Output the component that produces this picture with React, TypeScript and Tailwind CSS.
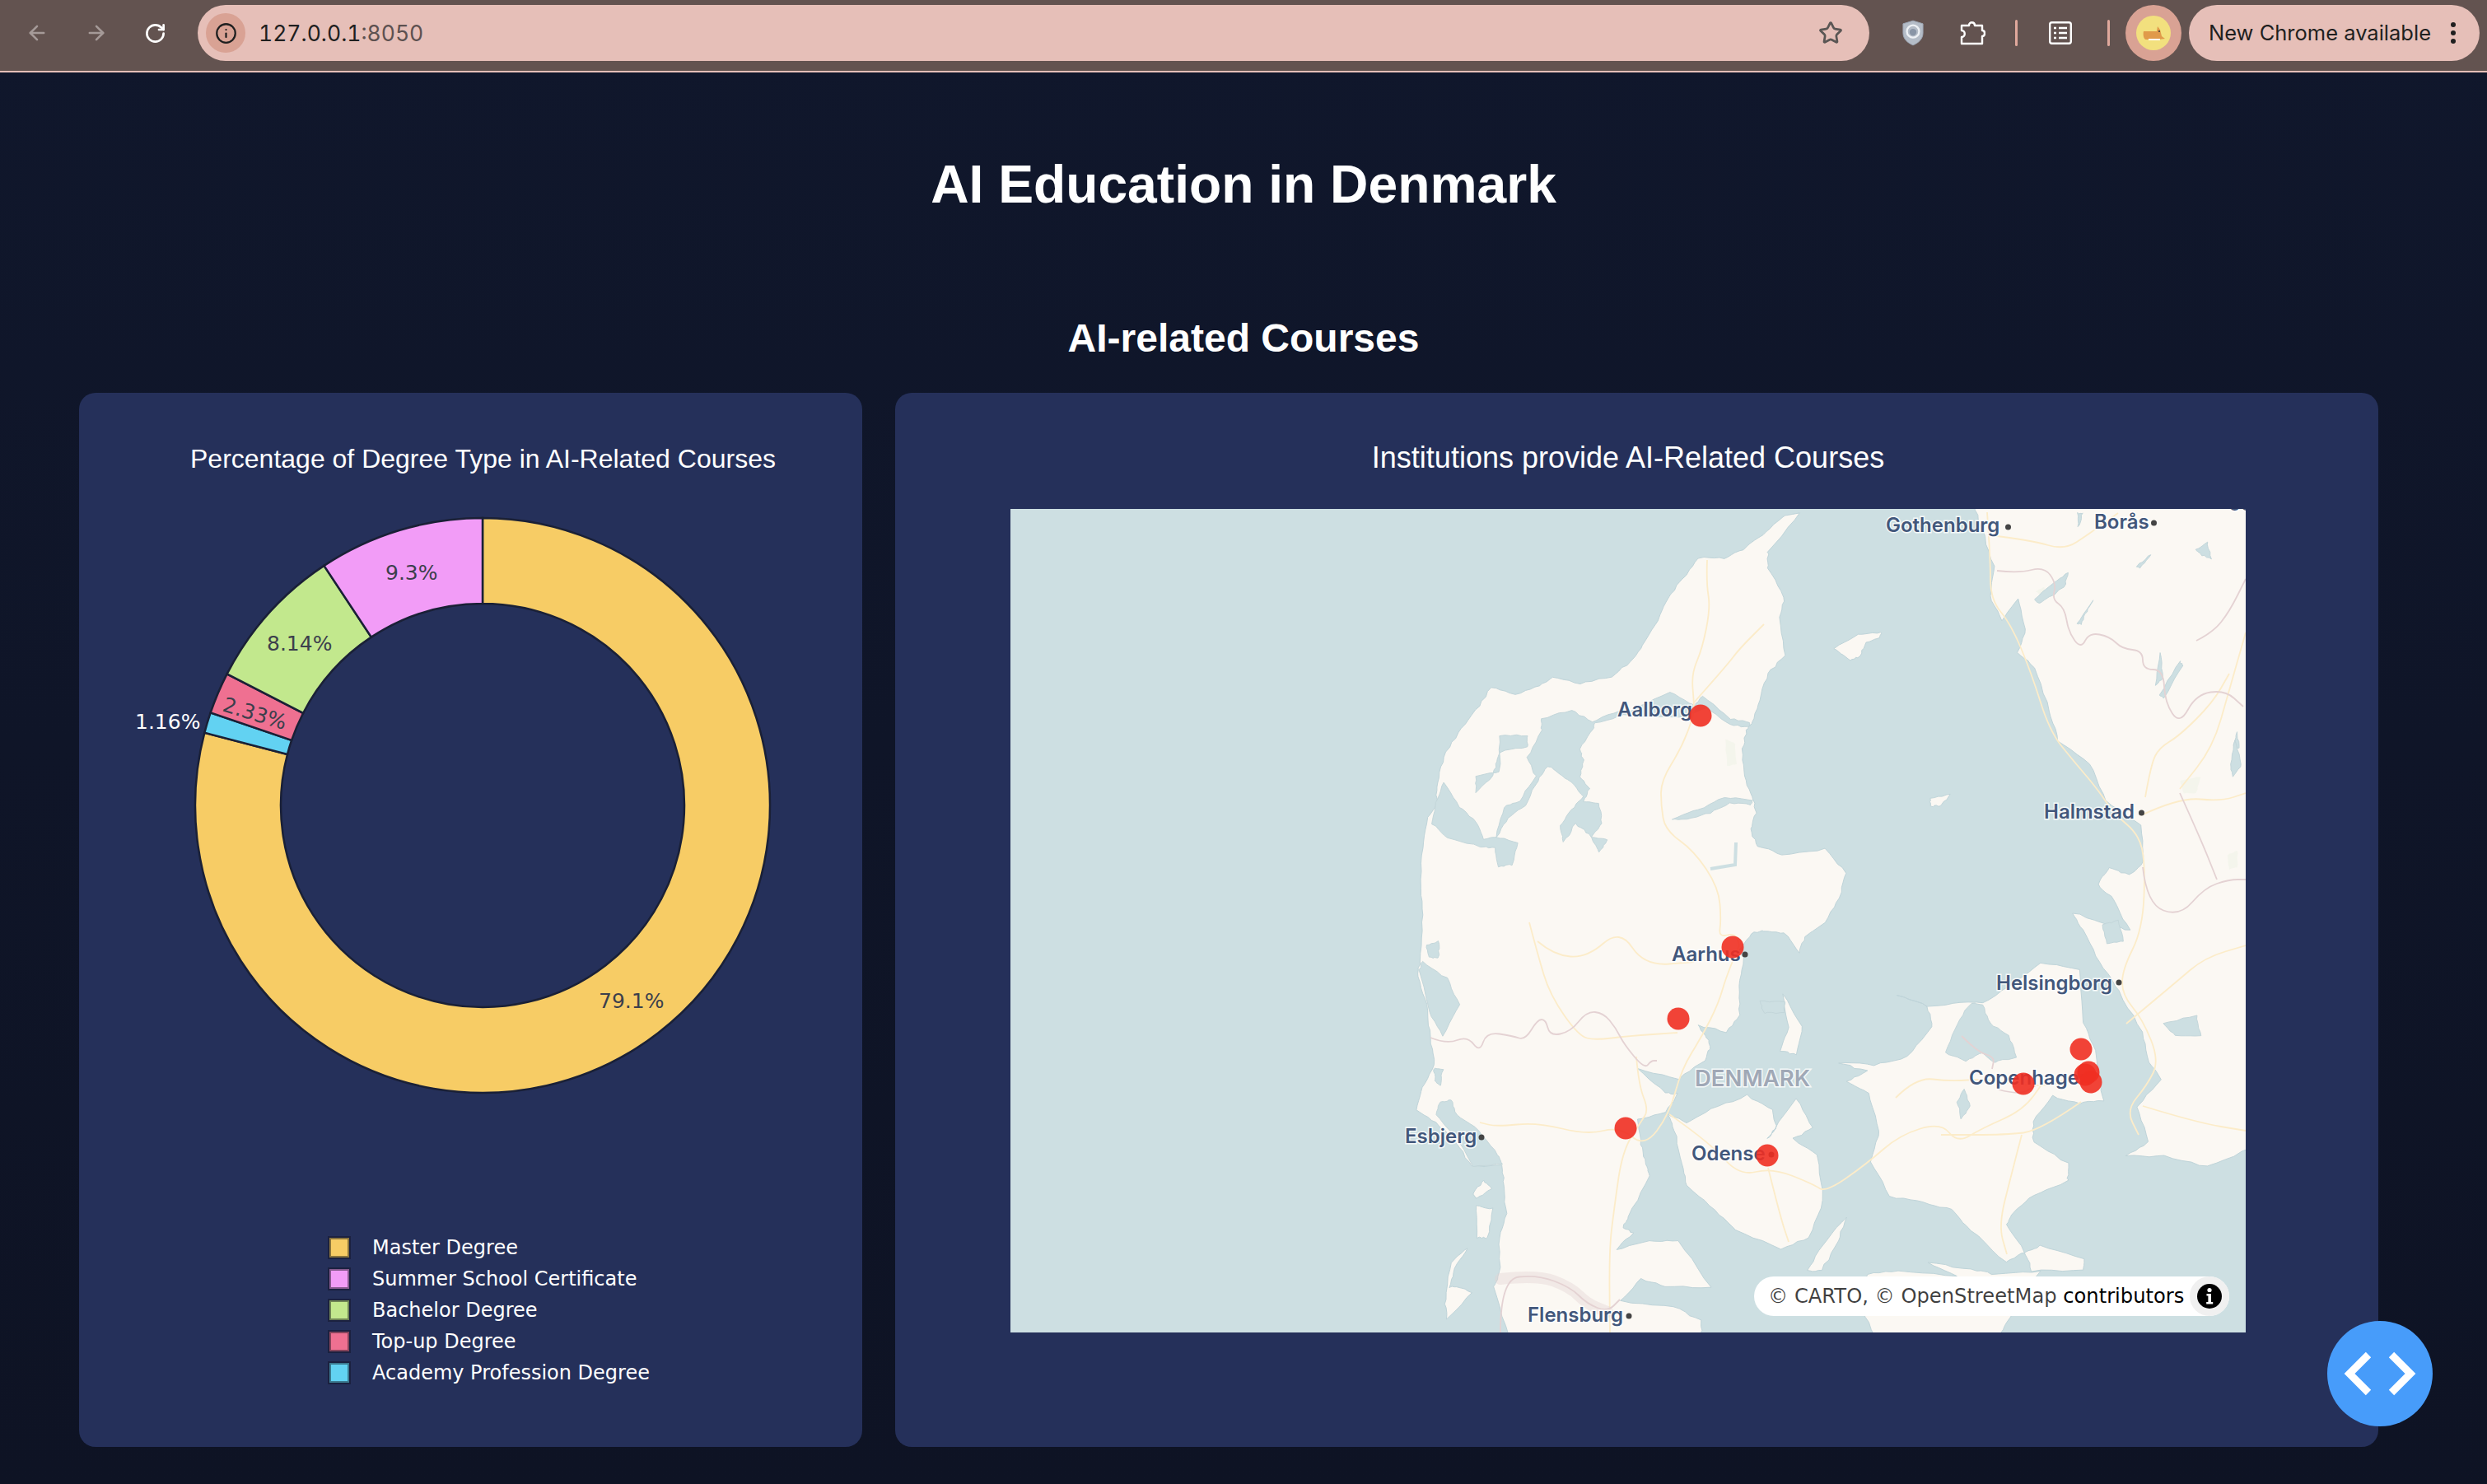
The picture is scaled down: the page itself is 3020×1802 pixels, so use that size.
import React from "react";
import { ArrowLeft, ArrowRight, RotateCw, Star, Info } from "lucide-react";

type P = [number, number];

function smooth(pts: P[]): string {
  const n = pts.length;
  const mid = (a: P, b: P): P => [(a[0] + b[0]) / 2, (a[1] + b[1]) / 2];
  let d = `M${pts[0][0]} ${pts[0][1]}`;
  for (let i = 1; i < n - 1; i++) {
    const m = mid(pts[i], pts[i + 1]);
    d += `Q${pts[i][0]} ${pts[i][1]} ${m[0]} ${m[1]}`;
  }
  return d + `L${pts[n - 1][0]} ${pts[n - 1][1]}`;
}

// closed coast: each edge is split and given a slight irregular offset
function rough(pts: P[], amp = 1.1): string {
  const out: P[] = [];
  const n = pts.length;
  for (let i = 0; i < n; i++) {
    const a = pts[i];
    const b = pts[(i + 1) % n];
    for (const t of [0, 0.2, 0.4, 0.6, 0.8]) {
      const x = a[0] + (b[0] - a[0]) * t;
      const y = a[1] + (b[1] - a[1]) * t;
      const s = Math.sin(x * 12.9898 + y * 78.233) * 43758.5453;
      const c = Math.sin(x * 39.346 + y * 11.135) * 24634.6345;
      out.push([+(x + (s - Math.floor(s) - 0.5) * 2 * amp).toFixed(1), +(y + (c - Math.floor(c) - 0.5) * 2 * amp).toFixed(1)]);
    }
  }
  return "M" + out.map((p) => `${p[0]} ${p[1]}`).join("L") + "Z";
}

const jutland: P[] = [
  [959, 4], [937, 10], [913, 32], [889, 49], [867, 60], [835, 59], [816, 85], [799, 107], [787, 135], [768, 165], [753, 186], [730, 204], [691, 212], [659, 205], [642, 215], [613, 225], [584, 217], [565, 244], [543, 272], [526, 302], [519, 332], [517, 359], [507, 375], [500, 412], [499, 460], [500, 502], [497, 549], [495, 569], [505, 602], [510, 642], [515, 675], [500, 702], [492, 729], [517, 745], [542, 770], [560, 798], [597, 797], [599, 822], [602, 855], [594, 885], [594, 929], [587, 945], [605, 1004], [840, 1004], [838, 985], [806, 969], [741, 962], [766, 935], [796, 945], [851, 945], [811, 889], [776, 889], [736, 899], [756, 879], [744, 872], [751, 859], [776, 809], [771, 795], [766, 772], [761, 742], [796, 732], [811, 710], [796, 709], [761, 680], [811, 692], [843, 669], [850, 652], [845, 642], [836, 627], [870, 635], [885, 615], [885, 579], [890, 545], [885, 535], [900, 515], [915, 512], [940, 515], [957, 539], [965, 519], [990, 502], [1007, 472], [1015, 442], [990, 413], [937, 420], [908, 409], [898, 389], [906, 369], [901, 350], [891, 325], [889, 292], [894, 269], [901, 259], [910, 232], [920, 199], [940, 179], [935, 132], [940, 107], [920, 72], [920, 52],
];
const funen: P[] = [[798, 735], [821, 745], [851, 729], [895, 712], [925, 729], [930, 749], [920, 765], [955, 715], [975, 752], [950, 765], [980, 785], [987, 839], [970, 885], [935, 899], [880, 875], [856, 852], [821, 822], [816, 795], [806, 755]];
const zealand: P[] = [[1077, 590], [1114, 604], [1119, 629], [1089, 665], [1049, 675], [1005, 672], [1040, 683], [1015, 695], [1042, 709], [1055, 755], [1045, 792], [1067, 835], [1109, 842], [1143, 851], [1166, 876], [1209, 915], [1232, 902], [1251, 895], [1303, 911], [1303, 925], [1240, 925], [1232, 902], [1209, 868], [1218, 855], [1242, 833], [1284, 816], [1284, 795], [1242, 769], [1242, 743], [1265, 713], [1298, 722], [1327, 718], [1317, 658], [1303, 623], [1298, 559], [1251, 551], [1220, 575], [1180, 600], [1164, 598], [1114, 604]];
const sweden: P[] = [[1170, -4], [1180, 25], [1194, 69], [1189, 105], [1204, 135], [1223, 109], [1233, 145], [1223, 175], [1243, 192], [1262, 245], [1272, 282], [1310, 309], [1330, 355], [1373, 385], [1376, 429], [1359, 445], [1335, 435], [1320, 455], [1340, 475], [1359, 512], [1335, 505], [1289, 490], [1303, 512], [1322, 551], [1346, 585], [1374, 636], [1383, 671], [1397, 692], [1369, 726], [1381, 769], [1355, 786], [1402, 786], [1454, 799], [1506, 776], [1506, -6]];
const lolland: P[] = [[1040, 929], [1079, 925], [1149, 932], [1114, 915], [1166, 923], [1199, 930], [1251, 925], [1213, 983], [1199, 1004], [1050, 1004], [1030, 965]];
const langeland: P[] = [[1015, 859], [1005, 890], [985, 925], [968, 925], [985, 895]];
const laeso: P[] = [[1000, 169], [1029, 152], [1057, 150], [1056, 156], [1039, 162], [1032, 179], [1020, 184]];
const anholt: P[] = [[1116, 352], [1141, 347], [1129, 360], [1118, 361]];
const samso: P[] = [[938, 589], [962, 629], [955, 662], [935, 659], [945, 629]];
const romo: P[] = [[565, 845], [585, 850], [580, 885], [567, 885]];
const fano: P[] = [[575, 815], [585, 825], [565, 838], [562, 830]];
const sylt: P[] = [[555, 897], [540, 922], [532, 945], [545, 945], [560, 952], [530, 985], [528, 960], [535, 915]];
const waters: P[][] = [
  [[526, 332], [546, 362], [565, 379], [575, 402], [590, 398], [616, 405], [609, 432], [592, 434], [589, 412], [570, 410], [531, 399], [512, 382], [517, 357]],
  [[590, 398], [599, 362], [618, 355], [638, 325], [628, 302], [645, 269], [645, 255], [681, 244], [706, 259], [739, 245], [753, 245], [801, 222], [831, 239], [840, 227], [874, 255], [898, 259], [896, 265], [874, 262], [845, 242], [815, 252], [770, 252], [745, 250], [710, 260], [708, 267], [691, 292], [696, 305], [691, 325], [703, 339], [696, 355], [715, 357], [718, 382], [706, 399], [725, 402], [715, 417], [703, 395], [686, 382], [672, 405], [667, 385], [681, 365], [696, 349], [681, 332], [662, 318], [652, 312], [640, 330], [625, 360], [605, 375]],
  [[594, 275], [628, 275], [628, 289], [594, 295], [590, 310], [585, 325], [565, 345], [565, 325], [594, 319]],
  [[804, 377], [835, 365], [867, 350], [901, 354], [898, 359], [874, 357], [850, 369], [821, 377]],
  [[500, 549], [530, 570], [545, 602], [525, 640], [508, 610], [497, 560]],
  [[522, 720], [535, 718], [542, 735], [569, 755], [592, 785], [597, 795], [562, 799], [542, 765], [517, 735]],
  [[1166, 600], [1180, 602], [1190, 625], [1212, 640], [1222, 665], [1195, 672], [1180, 660], [1160, 670], [1135, 660], [1150, 625]],
  [[1243, 109], [1268, 90], [1284, 77], [1280, 95], [1250, 115]],
  [[1295, 140], [1315, 110], [1307, 125], [1300, 140]],
  [[1368, 70], [1385, 55], [1372, 72]],
  [[1296, 5], [1302, 5], [1297, 22]],
  [[1440, 50], [1453, 40], [1458, 60], [1445, 55]],
  [[1390, 215], [1397, 175], [1399, 205]],
  [[1395, 225], [1420, 185], [1424, 190], [1400, 230]],
  [[1485, 290], [1490, 270], [1492, 290]],
  [[1481, 310], [1487, 280], [1495, 310], [1485, 325]],
  [[1326, 505], [1345, 500], [1352, 525], [1332, 528]],
  [[1150, 720], [1158, 705], [1166, 725], [1155, 740]],
  [[910, 598], [940, 598], [940, 612], [915, 612]],
  [[1400, 625], [1440, 615], [1445, 640], [1415, 640]],
  [[505, 530], [520, 525], [520, 545], [508, 545]],
  [[514, 680], [525, 680], [522, 700], [516, 695]],
];
const roads: P[][] = [
  [[846, 62], [845, 90], [850, 120], [840, 170], [827, 200], [830, 235], [830, 250], [815, 290], [790, 330], [790, 360], [795, 390], [830, 415], [860, 460], [863, 500], [860, 520], [880, 515], [885, 530]],
  [[830, 235], [870, 190], [885, 170], [915, 140]],
  [[885, 530], [870, 565], [860, 600], [840, 640], [815, 680], [800, 735], [770, 775], [740, 750], [700, 760], [640, 745], [590, 750], [570, 745]],
  [[760, 665], [763, 700], [775, 730], [765, 745], [743, 780], [733, 850], [727, 900], [728, 1000]],
  [[630, 502], [640, 540], [655, 590], [690, 640], [710, 645], [750, 640], [810, 636]],
  [[640, 525], [660, 542], [700, 545], [740, 510], [770, 555], [830, 550]],
  [[800, 735], [850, 770], [885, 810], [925, 800], [975, 820], [990, 830], [1040, 795], [1080, 760], [1130, 745], [1150, 770], [1180, 752], [1230, 730], [1255, 695]],
  [[920, 800], [935, 860], [945, 890]],
  [[1075, 715], [1100, 690], [1140, 695], [1185, 692], [1230, 700], [1270, 700], [1300, 680]],
  [[1300, 720], [1250, 755], [1210, 760], [1130, 760]],
  [[1228, 760], [1215, 810], [1200, 870], [1210, 905]],
  [[1186, 4], [1190, 60], [1190, 110], [1215, 140], [1240, 200], [1262, 270], [1290, 305], [1320, 340], [1340, 370], [1370, 395], [1378, 430], [1375, 510], [1350, 560], [1350, 590], [1375, 620], [1395, 670], [1380, 700], [1355, 730], [1370, 760]],
  [[1190, 32], [1240, 38], [1280, 50], [1310, 30], [1345, 5]],
  [[1373, 372], [1420, 350], [1470, 355], [1500, 345]],
  [[1500, 150], [1480, 220], [1460, 290], [1420, 340]],
  [[1378, 350], [1385, 310], [1395, 290], [1420, 275], [1460, 235], [1480, 200]],
  [[1355, 625], [1415, 575], [1450, 545], [1500, 530]],
  [[1375, 725], [1440, 745], [1500, 755]],
];
const borders: P[][] = [
  [[1198, 75], [1225, 78], [1255, 70], [1270, 90], [1265, 110], [1280, 120], [1285, 150], [1300, 170], [1310, 150], [1335, 155], [1350, 170], [1375, 172], [1375, 195], [1400, 195], [1402, 235], [1420, 262], [1440, 225], [1475, 220], [1497, 240]],
  [[1440, 160], [1460, 150], [1480, 125], [1500, 85]],
  [[1375, 435], [1380, 480], [1420, 495], [1450, 460], [1480, 450], [1500, 450]],
  [[1420, 345], [1445, 400], [1465, 450]],
  [[510, 642], [530, 650], [555, 640], [570, 660], [578, 635], [610, 640], [625, 645], [640, 620], [650, 620], [655, 640], [680, 635], [700, 610], [720, 612], [735, 630], [745, 650], [770, 680], [778, 670], [785, 670]],
  [[595, 1000], [595, 935], [640, 930], [680, 945], [700, 965], [725, 975], [740, 960]],
  [[1155, 640], [1175, 660], [1195, 665], [1192, 680]],
  [[1200, 705], [1225, 712], [1245, 700]],
];
const greens: P[][] = [
  [[868, 280], [880, 285], [882, 310], [870, 312]],
  [[1420, 330], [1445, 325], [1440, 345], [1425, 345]],
  [[1478, 420], [1490, 415], [1490, 435], [1480, 438]],
  [[1245, 100], [1255, 95], [1255, 110]],
];
const markers: P[] = [[838, 251], [877, 532], [811, 619], [747, 752], [919, 785], [1230, 698], [1300, 656], [1305, 687], [1309, 684], [1312, 696]];
const dots: P[] = [[1211.5, 22], [1388.5, 17], [1373.5, 369], [892, 541], [572, 763], [924, 784], [751, 980], [1346, 575]];
const labels: { t: string; x: number; y: number }[] = [
  { t: "Gothenburg", x: 1063, y: 28 },
  { t: "Borås", x: 1316, y: 24 },
  { t: "Jönköping", x: 1480, y: 2 },
  { t: "Halmstad", x: 1255, y: 376 },
  { t: "Aalborg", x: 737, y: 252 },
  { t: "Aarhus", x: 803, y: 549 },
  { t: "Esbjerg", x: 479, y: 770 },
  { t: "Odense", x: 827, y: 791 },
  { t: "Flensburg", x: 628, y: 987 },
  { t: "Helsingborg", x: 1197, y: 584 },
  { t: "Copenhagen", x: 1164, y: 699 },
];

function MapView() {
  const lands = [jutland, funen, zealand, sweden, lolland, langeland, laeso, anholt, samso, romo, fano, sylt];
  return (
    <div className="relative ml-[140px] h-[1000px] w-[1500px] overflow-hidden bg-[#cddfe2]">
      <svg viewBox="0 0 1500 1000" className="block h-full w-full">
        {lands.map((l, i) => (
          <path key={i} d={rough(l)} fill="#fbf8f3" stroke="#bfd4d9" strokeWidth={1} strokeLinejoin="round" />
        ))}
        {greens.map((l, i) => (
          <path key={i} d={rough(l, 0.6)} fill="#f4f5ec" />
        ))}
        {waters.map((l, i) => (
          <path key={i} d={rough(l, 0.9)} fill="#cddfe2" stroke="#c3d6da" strokeWidth={1} strokeLinejoin="round" />
        ))}
        <path d="M881 405 L880 432 L850 437" fill="none" stroke="#cddfe2" strokeWidth={4} />
        {roads.map((l, i) => (
          <path key={i} d={smooth(l)} fill="none" stroke="#fcecc9" strokeWidth={1.8} />
        ))}
        {borders.map((l, i) => (
          <path key={i} d={smooth(l)} fill="none" stroke="#e4d2d3" strokeWidth={1.8} />
        ))}
        <path d={smooth([[595, 935], [640, 930], [680, 945], [700, 965], [725, 975]])} fill="none" stroke="#e4d2d3" strokeOpacity={0.4} strokeWidth={14} strokeLinecap="round" />
        {dots.map((d, i) => (
          <circle key={i} cx={d[0]} cy={d[1]} r={3.5} fill="#444" />
        ))}
        {labels.map((l) => (
          <text key={l.t} x={l.x} y={l.y} fontSize={24} fontWeight={600} fill="#42577b" stroke="#ffffff" strokeOpacity={0.8} strokeWidth={3} paintOrder="stroke" className="font-['Inter',sans-serif]">
            {l.t}
          </text>
        ))}
        <text x={831} y={701} fontSize={27.5} fontWeight={600} fill="#a0a8b6" stroke="#ffffff" strokeOpacity={0.8} strokeWidth={3} paintOrder="stroke" className="font-['Inter',sans-serif]">
          DENMARK
        </text>
        {markers.map((m, i) => (
          <circle key={i} cx={m[0]} cy={m[1]} r={13.5} fill="#ef2f22" fillOpacity={0.9} />
        ))}
      </svg>
      <div className="absolute left-[903px] top-[932px] flex h-[48px] w-[577px] items-center justify-between rounded-[24px] bg-white pl-[17px] font-['DejaVu_Sans',sans-serif] text-[24.2px] leading-none text-black/75">
        <span className="whitespace-nowrap">© CARTO, © OpenStreetMap <span className="text-black">contributors</span></span>
        <span className="flex h-[48px] w-[48px] items-center justify-center rounded-full bg-[#f0f0f0]">
          <svg viewBox="0 0 30 30" className="h-[30px] w-[30px]">
            <circle cx="15" cy="15" r="15" fill="#000" />
            <circle cx="15" cy="7.5" r="2.6" fill="#fff" />
            <path d="M11.5 12h5.5v10h2.2v2.5h-8v-2.5h2.2v-7.5h-1.9z" fill="#fff" />
          </svg>
        </span>
      </div>
    </div>
  );
}

const slices = [
  { v: 79.07, c: "#f7cc65" },
  { v: 1.16, c: "#62d2f2" },
  { v: 2.33, c: "#ef7091" },
  { v: 8.14, c: "#c2e88d" },
  { v: 9.3, c: "#f29cf7" },
];
const legendRows = [
  { name: "Master Degree", c: "bg-[#f7cc65] border-[#8a743d] outline-[#1b2140]" },
  { name: "Summer School Certificate", c: "bg-[#f29cf7] border-[#885a8f] outline-[#1b2140]" },
  { name: "Bachelor Degree", c: "bg-[#c2e88d] border-[#6f8555] outline-[#1b2140]" },
  { name: "Top-up Degree", c: "bg-[#ef7091] border-[#87445b] outline-[#1b2140]" },
  { name: "Academy Profession Degree", c: "bg-[#62d2f2] border-[#3b7a90] outline-[#1b2140]" },
];

function Donut() {
  const R = 349;
  const r = 245;
  const cx = 360;
  const cy = 352;
  let a = 0;
  const pt = (rad: number, deg: number): P => {
    const t = (deg * Math.PI) / 180;
    return [cx + rad * Math.sin(t), cy - rad * Math.cos(t)];
  };
  const paths = slices.map((s) => {
    const a0 = a;
    const a1 = a + (s.v / 100) * 360;
    a = a1;
    const large = a1 - a0 > 180 ? 1 : 0;
    const p0 = pt(R, a0);
    const p1 = pt(R, a1);
    const p2 = pt(r, a1);
    const p3 = pt(r, a0);
    return { d: `M${p0[0]} ${p0[1]}A${R} ${R} 0 ${large} 1 ${p1[0]} ${p1[1]}L${p2[0]} ${p2[1]}A${r} ${r} 0 ${large} 0 ${p3[0]} ${p3[1]}Z`, c: s.c };
  });
  return (
    <svg viewBox="0 0 720 704" className="ml-[130px] mt-[49px] block h-[704px] w-[720px] overflow-visible font-['DejaVu_Sans',sans-serif]">
      {paths.map((p, i) => (
        <path key={i} d={p.d} fill={p.c} stroke="#1a2036" strokeWidth={2.5} />
      ))}
      <g fontSize={25} fill="#3c3f4c">
        <text x={501} y={598}>79.1%</text>
        <text x={242} y={78}>9.3%</text>
        <text x={98} y={164}>8.14%</text>
        <text x={0} y={0} transform="translate(83 242) rotate(17)" textAnchor="middle" dominantBaseline="middle">2.33%</text>
      </g>
      <text x={-62} y={259} fontSize={25} fill="#ffffff">1.16%</text>
    </svg>
  );
}

function ChromeBar() {
  return (
    <div className="flex h-[88px] items-center border-b-2 border-[#e6bfb8] bg-[#635350] pb-[6px] font-['Inter',sans-serif]">
      <div className="flex w-[240px] items-center pl-[31px]">
        <ArrowLeft className="h-[28px] w-[28px] text-[#a59a98]" strokeWidth={2.2} />
        <ArrowRight className="ml-[44px] h-[28px] w-[28px] text-[#a59a98]" strokeWidth={2.2} />
        <RotateCw className="ml-[44px] h-[27px] w-[27px] text-white" strokeWidth={2.4} />
      </div>
      <div className="flex h-[68px] w-[2030px] items-center rounded-[34px] bg-[#e6bfb8] pl-[10px] pr-[32px]">
        <span className="flex h-[48px] w-[48px] items-center justify-center rounded-full bg-[#d9a294]">
          <Info className="h-[27px] w-[27px] text-[#1f1f1f]" strokeWidth={2} />
        </span>
        <span className="ml-[16px] text-[26.5px] leading-none tabular-nums text-[#1f1f1f]">
          127.0.0.1<span className="text-[#5d5150]">:8050</span>
        </span>
        <Star className="ml-auto h-[30px] w-[30px] text-[#5a5654]" strokeWidth={2.2} />
      </div>
      <svg viewBox="0 0 28 34" className="ml-[40px] h-[32px] w-[26px]">
        <path d="M14 1 L27 5 V17 C27 25 21 30 14 33 C7 30 1 25 1 17 V5 Z" fill="#b4bcc7" stroke="#9ea8b5" />
        <circle cx="14" cy="15" r="8" fill="none" stroke="#eef1f5" strokeWidth="2.5" />
        <circle cx="14" cy="16" r="4.5" fill="#8995a6" />
      </svg>
      <svg viewBox="0 0 31 30" className="ml-[44px] h-[30px] w-[31px]" fill="none" stroke="#fff" strokeWidth="2.4" strokeLinejoin="round">
        <path d="M2 6 H11 C11 1 18 1 18 6 H27 V12 C31 12 31 19 27 19 V28 H2 V20 C7 20 7 12 2 12 Z" />
      </svg>
      <span className="ml-[36px] h-[32px] w-[3px] rounded bg-[#e0a89c]" />
      <svg viewBox="0 0 28 28" className="ml-[38px] h-[28px] w-[28px]" fill="none" stroke="#fff" strokeWidth="2.4">
        <rect x="1.2" y="1.2" width="25.6" height="25.6" rx="2.5" />
        <path d="M6 8h3M12 8h10M6 14h3M12 14h10M6 20h3M12 20h10" />
      </svg>
      <span className="ml-[43px] h-[32px] w-[3px] rounded bg-[#e0a89c]" />
      <span className="ml-[19px] flex h-[68px] w-[68px] items-center justify-center rounded-full bg-[#d9a294]">
        <span className="flex h-[42px] w-[42px] items-center justify-center rounded-full bg-[#f2e07e]">
          <svg viewBox="0 0 28 20" className="h-[20px] w-[28px]">
            <path d="M2 8 H18 L19 2 L22 6 L24 14 L28 17 L20 18 H5 C2 18 1 12 2 8Z" fill="#e09a4a" />
            <path d="M8 17 H22 V19 H8Z" fill="#fff" />
            <circle cx="21" cy="8" r="1" fill="#333" />
          </svg>
        </span>
      </span>
      <div className="ml-[9px] flex h-[68px] w-[353px] items-center rounded-[34px] bg-[#e6bfb8] pl-[24px]">
        <span className="whitespace-nowrap text-[25.5px] leading-none text-[#1f1f1f]">New Chrome available</span>
        <svg viewBox="0 0 6 26" className="ml-[24px] h-[26px] w-[6px]" fill="#1f1f1f">
          <circle cx="3" cy="3" r="3" />
          <circle cx="3" cy="13" r="3" />
          <circle cx="3" cy="23" r="3" />
        </svg>
      </div>
    </div>
  );
}

export default function App() {
  return (
    <div className="relative h-[1802px] w-[3020px] overflow-hidden bg-gradient-to-b from-[#10172c] to-[#0e1324] font-['Liberation_Sans',sans-serif] text-white">
      <ChromeBar />
      <h1 className="mt-[96px] text-center text-[64.2px] font-bold leading-[80px]">AI Education in Denmark</h1>
      <h2 className="mt-[117px] text-center text-[48px] font-bold leading-[60px]">AI-related Courses</h2>
      <div className="mt-[36px] flex gap-[40px] pl-[96px] pr-[132px]">
        <section className="h-[1280px] w-[951px] shrink-0 rounded-[20px] bg-[#25305a]">
          <div className="ml-[135px] w-[710px] whitespace-nowrap pt-[60px] text-center text-[32px] leading-[40px]">Percentage of Degree Type in AI-Related Courses</div>
          <Donut />
          <ul className="ml-[304px] mt-[171px] flex flex-col gap-[10px] font-['DejaVu_Sans',sans-serif] text-[24px] leading-[28px]">
            {legendRows.map((l) => (
              <li key={l.name} className="flex items-center">
                <span className={`box-border h-[24px] w-[24px] border-2 outline-2 ${l.c}`} />
                <span className="ml-[28px] whitespace-nowrap">{l.name}</span>
              </li>
            ))}
          </ul>
        </section>
        <section className="h-[1280px] flex-1 rounded-[20px] bg-[#25305a]">
          <div className="ml-[140px] w-[1500px] pt-[57px] text-center text-[36px] leading-[44px]">Institutions provide AI-Related Courses</div>
          <div className="h-[40px]" />
          <MapView />
        </section>
      </div>
      <button className="absolute left-[2826px] top-[1604px] flex h-[128px] w-[128px] items-center justify-center rounded-full bg-[#479cfa]">
        <svg viewBox="0 0 128 128" className="h-[128px] w-[128px]" fill="none" stroke="#fff" strokeWidth="9">
          <path d="M50 41 L27 64 L50 87" />
          <path d="M78 41 L101 64 L78 87" />
        </svg>
      </button>
    </div>
  );
}
